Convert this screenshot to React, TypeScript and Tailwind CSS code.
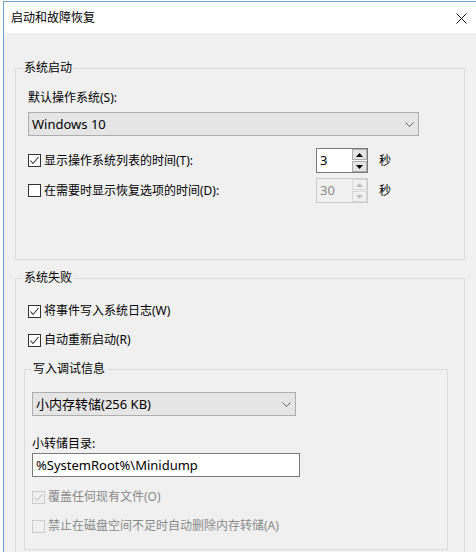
import React from 'react';

const FONT = "[font-family:'Noto_Sans','Noto_Sans_CJK_SC',sans-serif]";

const Check = ({ checked = false, disabled = false }: { checked?: boolean; disabled?: boolean }) => (
  <span
    className={`w-[13px] h-[13px] shrink-0 border flex items-center justify-center ${
      disabled ? 'border-[#cccccc] bg-[#f0f0f0]' : 'border-[#333333] bg-white'
    }`}
  >
    {checked && (
      <svg width="11" height="11" viewBox="0 0 11 11" fill="none">
        <polyline
          points="1.5,5.5 4,8.5 9.5,2"
          stroke={disabled ? '#c4c4c4' : '#333333'}
          strokeWidth="1.1"
        />
      </svg>
    )}
  </span>
);

const CheckRow = ({
  label,
  checked,
  disabled,
}: {
  label: string;
  checked?: boolean;
  disabled?: boolean;
}) => (
  <div className="flex items-center h-[16px] gap-[3px]">
    <Check checked={checked} disabled={disabled} />
    <span className={disabled ? 'text-[#8a8a8a]' : 'text-black'}>{label}</span>
  </div>
);

const Chevron = () => (
  <svg width="9" height="5" viewBox="0 0 9 5" fill="none">
    <polyline points="0.5,0.5 4.5,4.5 8.5,0.5" stroke="#606060" strokeWidth="1" />
  </svg>
);

const Select = ({ value, width }: { value: string; width: string }) => (
  <div
    className={`${width} h-[24px] border border-[#adadad] bg-[#e5e5e5] flex items-center justify-between pl-[3px] pr-[4px] text-[13px]`}
  >
    <span>{value}</span>
    <Chevron />
  </div>
);

const Arrow = ({ up, color }: { up?: boolean; color: string }) => (
  <svg width="7" height="4" viewBox="0 0 7 4">
    <polygon points={up ? '0,4 7,4 3.5,0' : '0,0 7,0 3.5,4'} fill={color} />
  </svg>
);

const Spin = ({ value, disabled = false }: { value: string; disabled?: boolean }) => (
  <div
    className={`w-[52px] h-[25px] border flex items-stretch ${
      disabled ? 'border-[#cccccc] bg-[#f0f0f0] text-[#8a8a8a]' : 'border-[#7a7a7a] bg-white text-black'
    }`}
  >
    <span className="flex-1 pl-[3px] text-[13px] leading-[23px]">{value}</span>
    <div className="w-[15px] flex flex-col gap-[1px]">
      <div
        className={`flex-1 border flex items-center justify-center ${
          disabled ? 'border-[#d9d9d9] bg-[#f0f0f0]' : 'border-[#adadad] bg-[#e5e5e5]'
        }`}
      >
        <Arrow up color={disabled ? '#bfbfbf' : '#000000'} />
      </div>
      <div
        className={`flex-1 border flex items-center justify-center ${
          disabled ? 'border-[#d9d9d9] bg-[#f0f0f0]' : 'border-[#adadad] bg-[#e5e5e5]'
        }`}
      >
        <Arrow color={disabled ? '#bfbfbf' : '#000000'} />
      </div>
    </div>
  </div>
);

const SpinRow = ({
  label,
  value,
  checked,
  disabled,
}: {
  label: string;
  value: string;
  checked?: boolean;
  disabled?: boolean;
}) => (
  <div className="flex items-center h-[25px]">
    <div className="w-[288px] flex items-center gap-[3px]">
      <Check checked={checked} />
      <span>{label}</span>
    </div>
    <Spin value={value} disabled={disabled} />
    <span className="ml-[11px]">秒</span>
  </div>
);

export default function App() {
  return (
    <div className={`w-[476px] h-[552px] overflow-hidden bg-white pt-[1px] pl-[3px] text-[12px] leading-[16px] text-black ${FONT}`}>
      <div className="h-full border-l border-t border-[#6f9fc4] flex flex-col">
        {/* title bar */}
        <div className="h-[31px] shrink-0 bg-white flex items-center justify-between pl-[7px] pr-[9px]">
          <span className="text-[12px]">启动和故障恢复</span>
          <svg width="11" height="11" viewBox="0 0 11 11" fill="none" className="mt-[2px]">
            <path d="M0.5 0.5 L10.5 10.5 M10.5 0.5 L0.5 10.5" stroke="#111111" strokeWidth="1" />
          </svg>
        </div>

        {/* body */}
        <div className="flex-1 bg-[#f0f0f0] pl-[11px] pt-[27px]">
          <fieldset className="w-[450px] border border-[#dcdcdc] pb-[56px]">
            <legend className="ml-[7px] px-[1px]">系统启动</legend>
            <div className="pl-[12px]">
              <div className="mt-[14px]">默认操作系统(S):</div>
              <div className="mt-[6px]">
                <Select value="Windows 10" width="w-[391px]" />
              </div>
              <div className="mt-[12px]">
                <SpinRow label="显示操作系统列表的时间(T):" value="3" checked />
              </div>
              <div className="mt-[5px]">
                <SpinRow label="在需要时显示恢复选项的时间(D):" value="30" disabled />
              </div>
            </div>
          </fieldset>

          <fieldset className="mt-[10px] w-[450px] border border-[#dcdcdc] pb-[40px]">
            <legend className="ml-[7px] px-[1px]">系统失败</legend>
            <div className="pl-[8px]">
              <div className="mt-[17px] pl-[4px]">
                <CheckRow label="将事件写入系统日志(W)" checked />
              </div>
              <div className="mt-[13px] pl-[4px]">
                <CheckRow label="自动重新启动(R)" checked />
              </div>

              <fieldset className="mt-[13px] w-[424px] border border-[#dcdcdc] pb-[15px]">
                <legend className="ml-[7px] px-[1px]">写入调试信息</legend>
                <div className="pl-[7px]">
                  <div className="mt-[15px]">
                    <Select value="小内存转储(256 KB)" width="w-[264px]" />
                  </div>
                  <div className="mt-[20px]">小转储目录:</div>
                  <div className="mt-[1px] w-[268px] h-[24px] border border-[#7a7a7a] bg-white pl-[3px] text-[13px] leading-[22px]">
                    %SystemRoot%\Minidump
                  </div>
                  <div className="mt-[12px]">
                    <CheckRow label="覆盖任何现有文件(O)" checked disabled />
                  </div>
                  <div className="mt-[13px]">
                    <CheckRow label="禁止在磁盘空间不足时自动删除内存转储(A)" disabled />
                  </div>
                </div>
              </fieldset>
            </div>
          </fieldset>
        </div>
      </div>
    </div>
  );
}
